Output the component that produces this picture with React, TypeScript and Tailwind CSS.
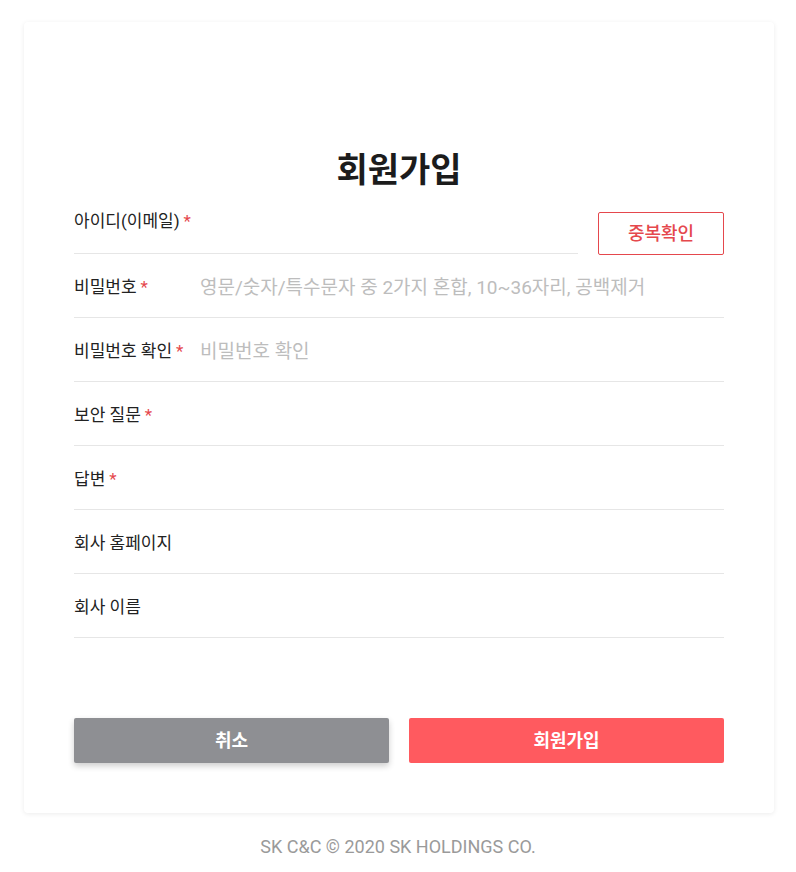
import React from "react"

const font = { fontFamily: 'Roboto, "Noto Sans CJK KR", sans-serif' }

function Star() {
  return <span className="ml-1 text-[#e5484d]">*</span>
}

function Row({ label, required, placeholder }: { label: string; required?: boolean; placeholder?: string }) {
  return (
    <div className="flex h-[64px] items-center border-b border-[#e6e6e6] pt-1">
      <label className="w-[126px] shrink-0 text-[17px] text-[#222]">
        {label}
        {required && <Star />}
      </label>
      <input
        className="h-full min-w-0 flex-1 bg-transparent text-[19px] text-[#222] outline-none placeholder:text-[#bdbdbd]"
        placeholder={placeholder}
      />
    </div>
  )
}

export default function App() {
  return (
    <div className="bg-white pt-[22px]" style={font}>
      <div className="ml-[24px] w-[750px] rounded-[4px] bg-white px-[50px] pt-[128px] pb-[50px] shadow-[0_1px_5px_rgba(0,0,0,0.08)]">
        {/* title */}
        <h1 className="text-center text-[34px] leading-[40px] font-bold text-[#1c1c1c]">회원가입</h1>

        {/* id row */}
        <div className="flex items-end gap-[20px]">
          <div className="flex h-[64px] flex-1 items-center border-b border-[#e6e6e6]">
            <label className="shrink-0 text-[17px] text-[#222]">
              아이디(이메일)
              <Star />
            </label>
            <input className="h-full min-w-0 flex-1 bg-transparent text-[19px] outline-none" />
          </div>
          <button className="mb-[-1px] h-[43px] w-[126px] rounded-[2px] border border-[#e5484d] text-[18px] font-medium text-[#e5484d]">
            중복확인
          </button>
        </div>

        <Row label="비밀번호" required placeholder="영문/숫자/특수문자 중 2가지 혼합, 10~36자리, 공백제거" />
        <Row label="비밀번호 확인" required placeholder="비밀번호 확인" />
        <Row label="보안 질문" required />
        <Row label="답변" required />
        <Row label="회사 홈페이지" />
        <Row label="회사 이름" />

        {/* buttons */}
        <div className="mt-[80px] flex gap-[20px]">
          <button className="h-[45px] flex-1 rounded-[2px] bg-[#8e8f93] text-[18px] font-bold text-white shadow-[0_3px_6px_rgba(0,0,0,0.2)]">
            취소
          </button>
          <button className="h-[45px] flex-1 rounded-[2px] bg-[#ff5a5f] text-[18px] font-bold text-white">
            회원가입
          </button>
        </div>
      </div>

      <p className="mt-[20px] text-center text-[18px] text-[#9a9a9a]">SK C&amp;C © 2020 SK HOLDINGS CO.</p>
    </div>
  )
}
